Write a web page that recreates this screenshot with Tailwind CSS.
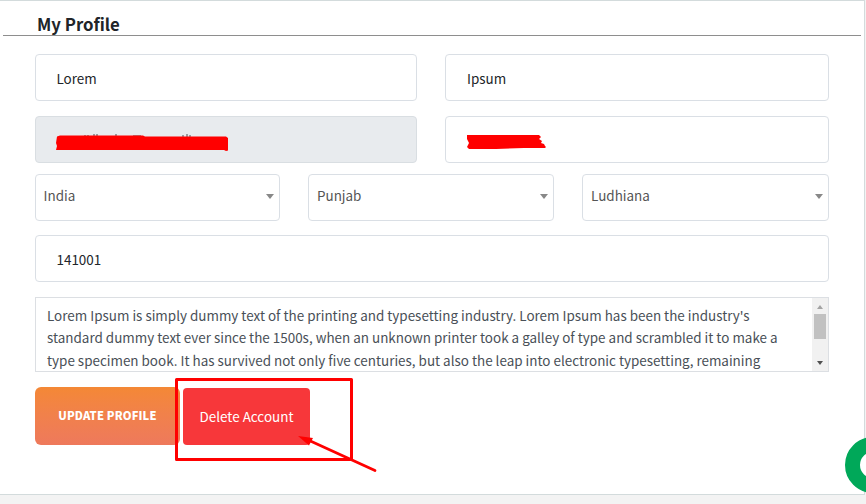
<!DOCTYPE html>
<html lang="en">
<head>
    <meta charset="UTF-8">
    <meta name="viewport" content="width=device-width, initial-scale=1.0">
    <title>My Profile</title>
    <script src="https://cdn.jsdelivr.net/npm/@tailwindcss/browser@4"></script>
</head>
<body class="relative h-[504px] overflow-hidden bg-[#f3f3f3] font-['Noto_Sans_CJK_SC','Open_Sans',sans-serif] text-[13.45px] text-[#212529]">

    <div class="h-[495px] w-[865px] border-t border-r border-b border-[#d3dbdc] bg-white">
        <header class="ml-[3px] mr-[3px] h-[35px] border-b border-[#8e8e8e] pl-[34px] pt-[10px]">
            <h1 class="text-[16.75px] font-bold leading-[26px]">My Profile</h1>
        </header>

        <form class="ml-[35px] mr-[35px] pt-[18px]">
            <div class="grid grid-cols-[382px_384px] gap-x-[28px] gap-y-[15px]">
                <input type="text" value="Lorem" class="h-[47px] rounded border border-[#dadfe5] px-[20.5px]">
                <input type="text" value="Ipsum" class="h-[47px] rounded border border-[#dadfe5] px-[21px]">
                <div class="relative h-[47px] rounded border border-[#d9dee2] bg-[#e8ebee]">
                    <svg class="absolute left-[19px] top-[15px]" width="176" height="22" viewBox="0 0 176 22">
                        <path d="M30 3v2M33 3v2M39 2v3M42 2v3M61 2v3M78 4h8M128 3v2M132 2v3M135 3v2" stroke="#4b4f55" stroke-width="1"/>
                        <path d="M2 4.500L5 3.500H88L90 4.500H171L173 6V18.500L171 19L169 18H1L2 14L1 11Z" fill="#ff0000"/>
                    </svg>
                </div>
                <div class="relative h-[47px] rounded border border-[#dadfe5]">
                    <svg class="absolute left-[20px] top-[15px]" width="84" height="20" viewBox="0 0 84 20">
                        <path d="M1 3H73L75 5L73 7L76 9L75 11L78 12L79 14L80 15L79 16H58L30 17H3L1 15L3 11L1 7Z" fill="#ff0000"/>
                    </svg>
                </div>
            </div>

            <div class="mt-[11px] grid grid-cols-[245px_246px_247px] gap-x-[28px] text-[#555]">
                <div class="flex h-[47px] items-center justify-between rounded border border-[#dadfe5] pl-[7.5px] pr-[5px] pb-[3px]">
                    <span class="pb-[2px]">India</span>
                    <svg width="8" height="5" viewBox="0 0 8 5"><path d="M0 0H8L4 5Z" fill="#888"/></svg>
                </div>
                <div class="flex h-[47px] items-center justify-between rounded border border-[#dadfe5] pl-[8px] pr-[5px] pb-[3px]">
                    <span class="pb-[2px]">Punjab</span>
                    <svg width="8" height="5" viewBox="0 0 8 5"><path d="M0 0H8L4 5Z" fill="#888"/></svg>
                </div>
                <div class="flex h-[47px] items-center justify-between rounded border border-[#dadfe5] pl-[8px] pr-[5px] pb-[3px]">
                    <span class="pb-[2px]">Ludhiana</span>
                    <svg width="8" height="5" viewBox="0 0 8 5"><path d="M0 0H8L4 5Z" fill="#888"/></svg>
                </div>
            </div>

            <input type="text" value="141001" class="mt-[14px] block h-[47px] w-[794px] rounded border border-[#dadfe5] px-[20.5px]">

            <!-- address box with its scrollbar -->
            <div class="mt-[15px] flex h-[75px] w-[794px] overflow-hidden border border-[#dcdfe3] text-[#495057]">
                <div class="flex-1 whitespace-nowrap pl-[11px] pt-[5.5px] leading-[22.5px]">
                    <p>Lorem Ipsum is simply dummy text of the printing and typesetting industry. Lorem Ipsum has been the industry's</p>
                    <p>standard dummy text ever since the 1500s, when an unknown printer took a galley of type and scrambled it to make a</p>
                    <p>type specimen book. It has survived not only five centuries, but also the leap into electronic typesetting, remaining</p>
                </div>
                <div class="flex w-4 shrink-0 flex-col items-center bg-[#f1f1f1]">
                    <svg class="mt-[7px]" width="6" height="4" viewBox="0 0 6 4"><path d="M0 4H6L3 0Z" fill="#a3a3a3"/></svg>
                    <div class="mt-[5px] h-[25px] w-3 bg-[#c1c1c1]"></div>
                    <svg class="mt-[22px]" width="6" height="4" viewBox="0 0 6 4"><path d="M0 0H6L3 4Z" fill="#505050"/></svg>
                </div>
            </div>

            <div class="mt-[15px] flex gap-[3px]">
                <button type="button" class="h-[58px] w-[145px] rounded-md bg-linear-to-b from-[#f48835] to-[#ee795c] pb-[2px] text-[11.2px] font-black tracking-[0.15px] text-white">UPDATE PROFILE</button>
                <button type="button" class="mt-px h-[57px] w-[127px] rounded bg-[#f7373a] text-white">Delete Account</button>
            </div>
        </form>
    </div>

    <!-- highlight box and arrow -->
    <svg class="absolute left-[170px] top-[370px]" width="220" height="110" viewBox="0 0 220 110">
        <rect x="6.500" y="9.500" width="175" height="80" fill="none" stroke="#ff0000" stroke-width="3" stroke-linejoin="round"/>
        <path d="M136 69L205 100.500" stroke="#ff0000" stroke-width="2.800" stroke-linecap="round"/>
        <path d="M128 66L143 68L139 75.500Z" fill="#ff0000"/>
    </svg>

    <!-- chat bubble -->
    <div class="absolute left-[845px] top-[437px] h-[56px] w-[56px] rounded-full border-[15px] border-[#00a859] bg-white"></div>

</body>
</html>
